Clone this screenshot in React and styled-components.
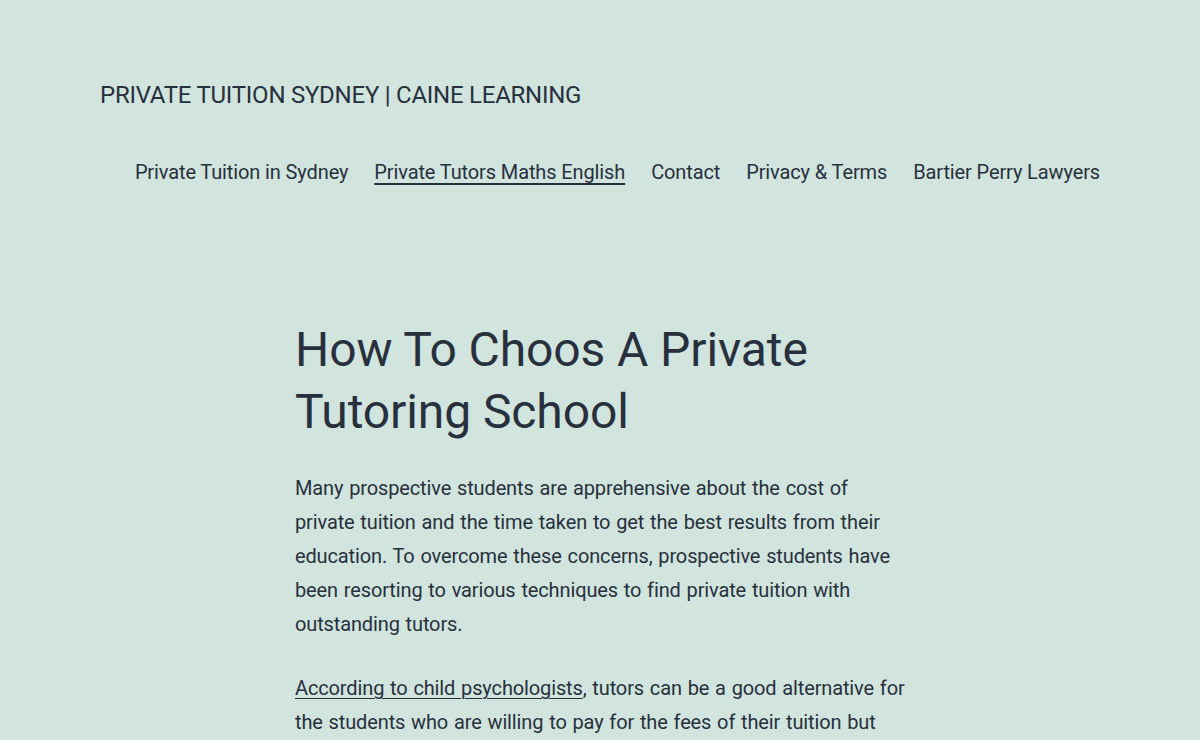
import React from "react";
import styled, { createGlobalStyle } from "styled-components";

const Global = createGlobalStyle`
  html, body { margin: 0; padding: 0; }
  body {
    background: #d1e4dd;
    color: #28303d;
    font-family: Roboto, "Noto Sans", sans-serif;
    -webkit-font-smoothing: antialiased;
  }
  * { box-sizing: border-box; }
`;

const Page = styled.div`
  min-height: 740px;
  background: #d1e4dd;
  overflow: hidden;
`;

const Header = styled.header`
  max-width: 1000px;
  margin: 0 auto;
  padding-top: 80px;
`;

const SiteTitle = styled.p`
  margin: 0;
  font-size: 24px;
  line-height: 31px;
  text-transform: uppercase;
  letter-spacing: -0.25px;
  color: #28303d;
`;

const Nav = styled.nav`
  margin-top: 35px;
  display: flex;
  justify-content: flex-end;
`;

const NavList = styled.ul`
  list-style: none;
  margin: 0 -13px 0 0;
  padding: 0;
  display: flex;
`;

const NavItem = styled.li`
  padding: 13px;
  font-size: 20px;
  line-height: 26px;
  letter-spacing: -0.12px;
  white-space: nowrap;
`;

const NavLink = styled.a`
  color: #28303d;
  text-decoration: ${(p) => (p.$current ? "underline" : "none")};
  text-decoration-thickness: 2px;
  text-underline-offset: 4px;
`;

const Main = styled.main`
  max-width: 610px;
  margin: 0 auto;
  padding-top: 121px;
`;

const Title = styled.h1`
  margin: 0 0 27px;
  font-size: 48px;
  font-weight: 400;
  line-height: 62.4px;
  letter-spacing: -0.1px;
  color: #28303d;
`;

const Para = styled.p`
  margin: 0 0 30px;
  font-size: 20px;
  line-height: 34px;
  letter-spacing: -0.13px;
  word-spacing: 1px;
`;

const TextLink = styled.a`
  color: #28303d;
  text-decoration: underline;
  text-decoration-thickness: 1px;
  text-underline-offset: 3px;
`;

const navItems = [
  "Private Tuition in Sydney",
  "Private Tutors Maths English",
  "Contact",
  "Privacy & Terms",
  "Bartier Perry Lawyers",
];

export default function App() {
  return (
    <Page>
      <Global />
      <Header>
        <SiteTitle>Private Tuition Sydney | Caine Learning</SiteTitle>
        <Nav>
          <NavList>
            {navItems.map((t) => (
              <NavItem key={t}>
                <NavLink href="#" $current={t === "Private Tutors Maths English"}>
                  {t}
                </NavLink>
              </NavItem>
            ))}
          </NavList>
        </Nav>
      </Header>
      <Main>
        <Title>How To Choos A Private Tutoring School</Title>
        <Para>
          Many prospective students are apprehensive about the cost of private tuition and the
          time taken to get the best results from their education. To overcome these concerns,
          prospective students have been resorting to various techniques to find private tuition
          with outstanding tutors.
        </Para>
        <Para>
          <TextLink href="#">According to child psychologists</TextLink>, tutors can be a good
          alternative for the students who are willing to pay for the fees of their tuition but
          are not sure about the results they will get from their studies.
        </Para>
      </Main>
    </Page>
  );
}
